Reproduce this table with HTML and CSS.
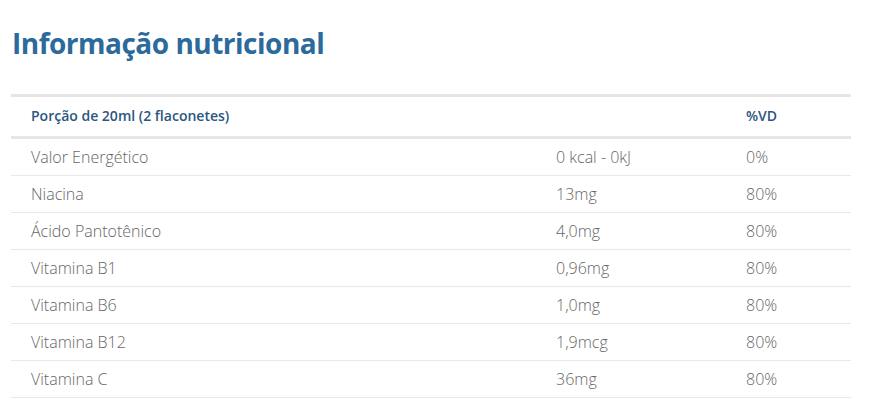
FILE: index.html
```html
<!DOCTYPE html>
<html lang="pt">
<head>
<meta charset="utf-8">
<link rel="stylesheet" href="styles.css">
</head>
<body>
<div class="wrap">
  <h2 class="title">Informação nutricional</h2>
  <table class="nutri">
    <thead>
      <tr><th>Porção de 20ml (2 flaconetes)</th><th></th><th>%VD</th></tr>
    </thead>
    <tbody>
      <tr><td>Valor Energético</td><td>0 kcal - 0kJ</td><td>0%</td></tr>
      <tr><td>Niacina</td><td>13mg</td><td>80%</td></tr>
      <tr><td>Ácido Pantotênico</td><td>4,0mg</td><td>80%</td></tr>
      <tr><td>Vitamina B1</td><td>0,96mg</td><td>80%</td></tr>
      <tr><td>Vitamina B6</td><td>1,0mg</td><td>80%</td></tr>
      <tr><td>Vitamina B12</td><td>1,9mcg</td><td>80%</td></tr>
      <tr><td>Vitamina C</td><td>36mg</td><td>80%</td></tr>
    </tbody>
  </table>
</div>
</body>
</html>
```

FILE: styles.css
```css
html, body { margin: 0; padding: 0; background: #fff; }
.wrap { padding: 0 18px 0 11px; font-family: "Open Sans", sans-serif; }
.title {
  margin: 0;
  padding: 24px 0 0 1px;
  height: 70px;
  box-sizing: border-box;
  font-size: 28px;
  line-height: 38px;
  font-weight: 700;
  color: #2c6a9c;
  letter-spacing: -0.5px;
}
.nutri {
  width: 840px;
  border-collapse: collapse;
  margin-top: 24px;
}
.nutri th {
  text-align: left;
  font-size: 14px;
  font-weight: 600;
  color: #2d5680;
  height: 36px;
  padding: 0 0 3px 20px;
  border-top: 3px solid #e6e6e6;
  border-bottom: 3px solid #e6e6e6;
}
.nutri td {
  font-size: 16px;
  font-weight: 300;
  color: #666;
  height: 36px;
  padding: 0 0 0 20px;
  border-bottom: 1px solid #e8e8e8;
}
.nutri th:nth-child(1), .nutri td:nth-child(1) { width: 505px; }
.nutri th:nth-child(2), .nutri td:nth-child(2) { width: 170px; }
```
